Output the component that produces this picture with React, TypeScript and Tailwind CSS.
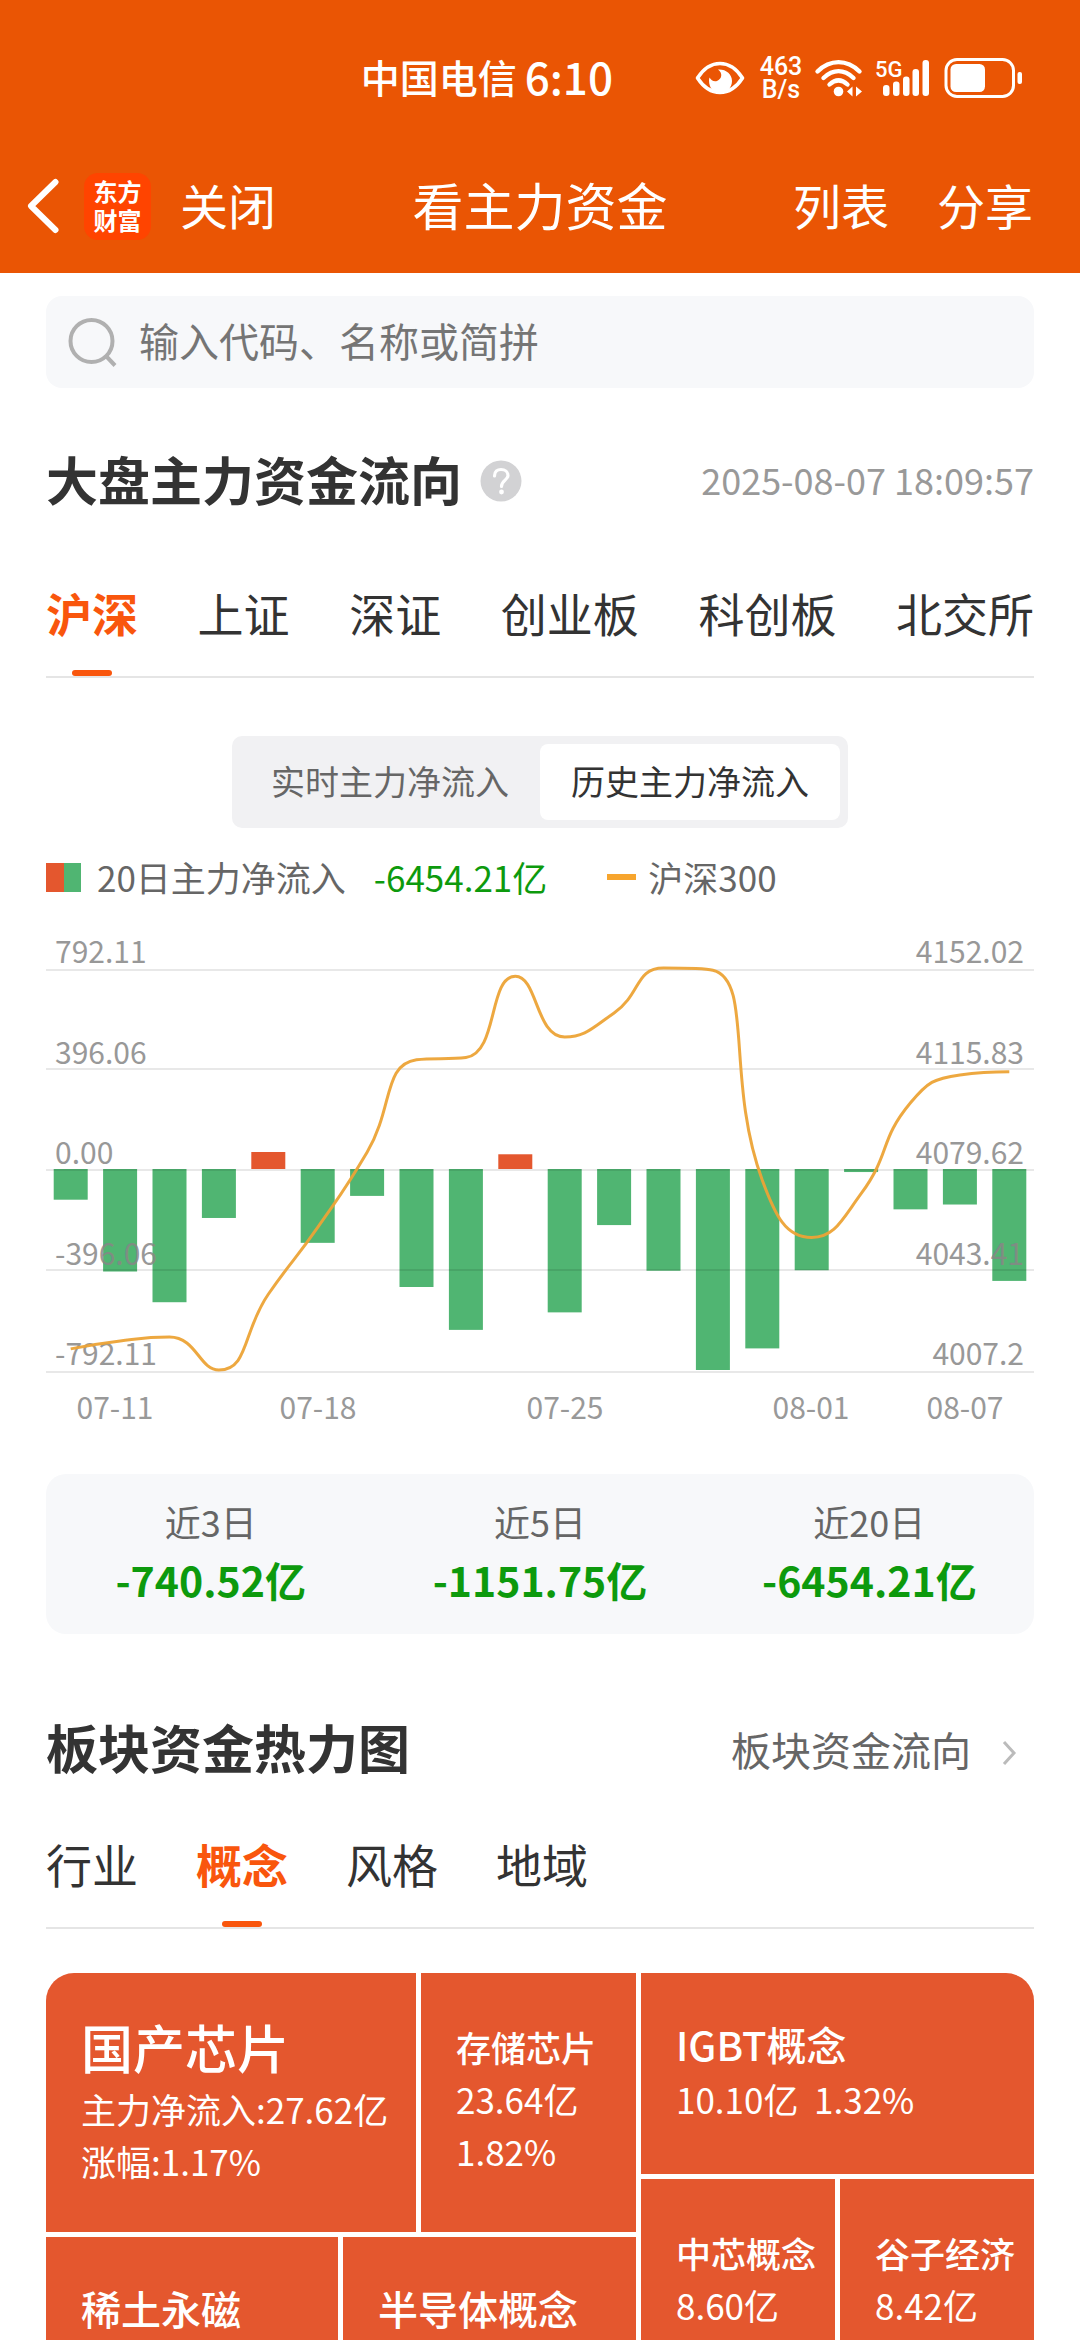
import { clsx } from "clsx";

const marketTabs = ["沪深", "上证", "深证", "创业板", "科创板", "北交所"];
const boardTabs = ["行业", "概念", "风格", "地域"];

// daily net inflow (亿) and CSI 300 close
const flows = [
  -121, -404, -525, -193, 67, -291, -106, -465, -634, 58, -565, -221, -401, -792.11, -707, -399, -12, -159, -140, -441,
];
const closes = [
  4014.81, 4017.67, 4019.06, 4007.2, 4034.49, 4058.55, 4085.61, 4118.96, 4119.77, 4149.04, 4127.16, 4135.82, 4152.02,
  4151.24, 4075.59, 4054.93, 4070.7, 4103.45, 4113.49, 4114.67,
];

const axisRows = [
  { left: "792.11", right: "4152.02", y: 39 },
  { left: "396.06", right: "4115.83", y: 138 },
  { left: "0.00", right: "4079.62", y: 239 },
  { left: "-396.06", right: "4043.41", y: 339 },
  { left: "-792.11", right: "4007.2", y: 441 },
];

const dateLabels = [
  { text: "07-11", x: 69 },
  { text: "07-18", x: 272 },
  { text: "07-25", x: 519 },
  { text: "08-01", x: 765 },
  { text: "08-07", x: 919 },
];

const summary = [
  { label: "近3日", value: "-740.52亿" },
  { label: "近5日", value: "-1151.75亿" },
  { label: "近20日", value: "-6454.21亿" },
];

const CHART_W = 988;
const ZERO_Y = 239;
const HALF_H = 201;
const STEP = CHART_W / flows.length;

type Point = [number, number];

function clamp(v: number, a: number, b: number) {
  return Math.max(Math.min(a, b), Math.min(Math.max(a, b), v));
}

// smooth curve whose control points stay inside each segment's box
function smoothPath(pts: Point[], smooth = 0.5) {
  let d = `M${pts[0][0]},${pts[0][1]}`;
  let c0: Point = pts[0];
  for (let i = 1; i < pts.length; i++) {
    const prev = pts[i - 1];
    const cur = pts[i];
    const next = pts[i + 1];
    let c1: Point = cur;
    let nextC0: Point = cur;
    if (next) {
      const lenPrev = Math.hypot(cur[0] - prev[0], cur[1] - prev[1]);
      const lenNext = Math.hypot(next[0] - cur[0], next[1] - cur[1]);
      const ratio = lenNext / (lenNext + lenPrev);
      const out = [0, 1].map((k) => {
        const v = next[k] - prev[k];
        let n = clamp(cur[k] + v * smooth * ratio, cur[k], next[k]);
        const p = clamp(cur[k] - ((n - cur[k]) * lenPrev) / lenNext, prev[k], cur[k]);
        n = cur[k] + ((cur[k] - p) * lenNext) / lenPrev;
        return [p, n];
      });
      c1 = [out[0][0], out[1][0]];
      nextC0 = [out[0][1], out[1][1]];
    }
    d += ` C${c0[0]},${c0[1]} ${c1[0]},${c1[1]} ${cur[0]},${cur[1]}`;
    c0 = nextC0;
  }
  return d;
}

function FlowChart() {
  const line = closes.map((c, i): Point => [
    STEP * (i + 0.5),
    ZERO_Y - HALF_H + ((4152.02 - c) / (4152.02 - 4007.2)) * HALF_H * 2,
  ]);

  return (
    <svg viewBox="0 0 988 500" className="block w-full" role="img" aria-label="历史主力净流入">
      {flows.map((v, i) => {
        const h = (Math.abs(v) / 792.11) * HALF_H;
        return (
          <rect
            key={i}
            x={STEP * (i + 0.5) - 17}
            y={v > 0 ? ZERO_Y - h : ZERO_Y}
            width={34}
            height={h}
            fill={v > 0 ? "#e4572e" : "#50b572"}
          />
        );
      })}
      {axisRows.map((row, i) => {
        const labelY = Math.round(33 + i * 100.5);
        return (
          <g key={row.left}>
            <rect x={0} y={row.y} width={988} height={2} fill="#000" opacity={0.09} />
            <g className="text-[30px]" fill="#878787" opacity={0.85}>
              <text x={9} y={labelY}>
                {row.left}
              </text>
              <text x={978} y={labelY} textAnchor="end">
                {row.right}
              </text>
            </g>
          </g>
        );
      })}
      <path d={smoothPath(line)} fill="none" stroke="#eca336" strokeWidth={3} opacity={0.95} />
      <g className="text-[30px]" fill="#999" textAnchor="middle">
        {dateLabels.map((d) => (
          <text key={d.text} x={d.x} y={489}>
            {d.text}
          </text>
        ))}
      </g>
    </svg>
  );
}

function StatusBar() {
  return (
    <div className="flex h-[156px] items-center justify-end gap-[82px] pr-[56px]">
      <div className="flex items-center gap-2 pb-1 font-medium">
        <span className="text-[39px]">中国电信</span>
        <span className="text-[44px]">6:10</span>
      </div>
      <div className="flex items-center">
        <svg viewBox="0 0 50 34" className="h-[34px] w-[50px]" fill="none" aria-hidden>
          <path
            d="M2.5 17 C9 7 17 2.5 25 2.5 S41 7 47.5 17 C41 27 33 31.5 25 31.5 S9 27 2.5 17Z"
            stroke="white"
            strokeWidth="3.6"
            strokeLinejoin="round"
          />
          <path
            d="M23 8.5 C31 8 37 13 37 20 C37 27 31.5 32 25 32 C19 32 14 27.5 14 19.5 C14 18.5 14.2 17.5 14.6 16.5 C16 19.500 19 21 22 20 C27 18 28 12 23 8.5Z"
            fill="white"
          />
        </svg>
        <div className="ml-[13px] flex w-[46px] flex-col items-center font-['Roboto'] text-[25px] leading-[23px] font-medium">
          <span>463</span>
          <span>B/s</span>
        </div>
        <svg viewBox="0 0 50 38" className="ml-[10px] h-[38px] w-[50px]" fill="none" aria-hidden>
          <g stroke="white" strokeWidth="4.4" strokeLinecap="round">
            <path d="M3.5 12.5 C16 0 33 0 45.5 12.5" />
            <path d="M9.5 19 C19 10 30 10 39.5 19" />
            <path d="M15.5 25.5 C21.5 20 27.5 20 33.5 25.5" />
          </g>
          <circle cx="24.5" cy="32.5" r="4.8" fill="white" />
          <path d="M38.5 27.5 V37.5 L33 32.5Z M42 27.5 V37.5 L48 32.5Z" fill="white" />
        </svg>
        <svg viewBox="0 -4 56 48" className="ml-[10px] h-[48px] w-[56px]" aria-hidden>
          <text x="1" y="19" fill="white" className="font-['Roboto'] text-[22px] font-medium">
            5G
          </text>
          <g fill="white">
            <rect x="9" y="27" width="6.5" height="11" rx="3" />
            <rect x="19" y="23.5" width="6.5" height="14.5" rx="3" />
            <rect x="29" y="18.5" width="6.5" height="19.5" rx="3" />
            <rect x="38.5" y="11" width="6.5" height="27" rx="3" />
            <rect x="48.5" y="2" width="6.5" height="36" rx="3" />
          </g>
        </svg>
        <svg viewBox="0 0 80 42" className="ml-[14px] h-[42px] w-[80px]" aria-hidden>
          <rect x="2" y="2.5" width="67.5" height="37" rx="11" fill="none" stroke="white" strokeWidth="3" />
          <rect x="6.5" y="7" width="34.5" height="28" rx="5.5" fill="white" />
          <rect x="73.5" y="15" width="4.5" height="12" rx="2" fill="white" />
        </svg>
      </div>
    </div>
  );
}

function NavBar() {
  return (
    <nav className="grid h-[100px] grid-cols-[1fr_auto_1fr] items-center px-[26px]">
      <div className="flex items-center">
        <button type="button" aria-label="返回">
          <svg viewBox="0 0 34 56" className="h-[56px] w-[34px]" fill="none" aria-hidden>
            <path d="M29.5 4 L5 28 L29.5 52" stroke="white" strokeWidth="6" strokeLinecap="round" strokeLinejoin="round" />
          </svg>
        </button>
        <span className="ml-6 flex size-[67px] flex-col items-center justify-center rounded-[14px] bg-[#ff4400] pb-0.5 text-[24px] leading-[29px] font-bold">
          <span>东方</span>
          <span>财富</span>
        </span>
        <button type="button" className="ml-[29px] pb-1 text-[48px]">
          关闭
        </button>
      </div>
      <h1 className="pb-1 text-[51px]">看主力资金</h1>
      <div className="flex justify-end gap-12 pr-[21px] pb-1 text-[48px]">
        <button type="button">列表</button>
        <button type="button">分享</button>
      </div>
    </nav>
  );
}

function Tabs({ items, active, className }: { items: string[]; active: string; className: string }) {
  return (
    <div role="tablist" className={clsx("flex border-b-2 border-[#e5e5e5] text-[46px] leading-[61px]", className)}>
      {items.map((item) => (
        <button
          key={item}
          type="button"
          role="tab"
          aria-selected={item === active}
          className={clsx(
            "flex flex-col items-center justify-between",
            item === active ? "font-bold text-[#f9560d]" : "text-[#333]",
          )}
        >
          {item}
          {item === active && <span className="h-[6px] w-10 rounded-full bg-[#f9560d]" />}
        </button>
      ))}
    </div>
  );
}

type TileProps = { name: string; lines: string[]; className: string; nameClass?: string };

function Tile({ name, lines, className, nameClass = "text-[35px] leading-[52px]" }: TileProps) {
  return (
    <div className={clsx("overflow-hidden bg-[#e4572e] pl-[35px] text-[35px] leading-[52px] whitespace-nowrap text-white", className)}>
      <h3 className={clsx("font-medium", nameClass)}>{name}</h3>
      {lines.map((l) => (
        <p key={l} className="whitespace-pre">
          {l}
        </p>
      ))}
    </div>
  );
}

export default function App() {
  return (
    <div className="flex h-screen flex-col overflow-hidden bg-white font-['Noto_Sans_CJK_SC',sans-serif] text-[#333]">
      <header className="h-[273px] flex-none bg-[#ea5504] text-white">
        <StatusBar />
        <NavBar />
      </header>

      <main className="flex min-h-0 flex-1 flex-col px-[46px] pt-[23px]">
        <label className="flex h-[92px] flex-none items-center gap-[21px] rounded-2xl bg-[#f7f8fa] px-[22px]">
          <svg viewBox="0 0 50 50" className="size-[50px]" fill="none" stroke="#b0b0b0" strokeWidth="4" aria-hidden>
            <circle cx="23.5" cy="24" r="21" />
            <path d="M38 39 L47 48.5" />
          </svg>
          <input
            type="search"
            aria-label="搜索"
            placeholder="输入代码、名称或简拼"
            className="min-w-0 flex-1 bg-transparent pb-1 text-[40px] outline-none placeholder:text-[#757575]"
          />
        </label>

        <div className="mt-[55px] flex h-[76px] flex-none items-center justify-between">
          <div className="flex items-center gap-[18px]">
            <h2 className="pb-1 text-[52px] font-bold">大盘主力资金流向</h2>
            <button type="button" aria-label="说明">
              <svg viewBox="0 0 42 42" className="size-[42px]" fill="none" aria-hidden>
                <circle cx="21" cy="21" r="20.5" fill="#d2d2d4" />
                <path
                  d="M14.5 16 C14.5 11.5 17.5 9.5 21 9.5 C25 9.5 28 12 28 15.5 C28 20 21.5 20.5 21.5 26.5"
                  stroke="white"
                  strokeWidth="3.2"
                  strokeLinecap="round"
                />
                <circle cx="21.5" cy="32" r="2.4" fill="white" />
              </svg>
            </button>
          </div>
          <time className="pb-1 text-[36px] text-[#999]">2025-08-07 18:09:57</time>
        </div>

        <Tabs items={marketTabs} active="沪深" className="mt-[63px] h-[96px] flex-none justify-between" />

        <div className="mt-[58px] flex h-[92px] flex-none self-center rounded-[10px] bg-[#f1f1f3] p-2 text-[34px]">
          <button type="button" className="w-[300px] pb-1 text-[#666]">
            实时主力净流入
          </button>
          <button type="button" className="w-[300px] rounded-lg bg-white pb-1">
            历史主力净流入
          </button>
        </div>

        <div className="mt-[23px] flex h-[52px] flex-none items-center text-[35px] text-[#666]">
          <span className="flex h-[29px] w-[35px]">
            <span className="flex-1 bg-[#e4572e]" />
            <span className="flex-1 bg-[#50b572]" />
          </span>
          <span className="ml-4">20日主力净流入</span>
          <span className="ml-7 text-[#0d9a0d]">-6454.21亿</span>
          <span className="ml-[60px] h-[6px] w-[29px] bg-[#f7a52e]" />
          <span className="ml-3">沪深300</span>
        </div>

        <div className="mt-[27px] flex-none">
          <FlowChart />
        </div>

        <dl className="mt-11 grid h-[160px] flex-none grid-cols-3 content-center rounded-[20px] bg-[#f7f8fa] pb-1 text-center">
          {summary.map((s) => (
            <div key={s.label}>
              <dt className="text-[36px] leading-[58px] text-[#666]">{s.label}</dt>
              <dd className="pb-1 text-[41px] leading-[58px] font-bold text-[#0d9a0d]">{s.value}</dd>
            </div>
          ))}
        </dl>

        <div className="mt-[77px] flex h-[76px] flex-none items-center justify-between">
          <h2 className="pb-1 text-[52px] font-bold">板块资金热力图</h2>
          <a href="#flow" className="flex items-center gap-[30px] pr-[17px] text-[40px] text-[#666]">
            板块资金流向
            <svg viewBox="0 0 16 28" className="mt-2 h-7 w-4" fill="none" aria-hidden>
              <path d="M3 3 L13 14 L3 25" stroke="#bbb" strokeWidth="3" />
            </svg>
          </a>
        </div>

        <Tabs items={boardTabs} active="概念" className="mt-[46px] h-[96px] flex-none gap-[58px]" />

        <section className="mt-11 grid min-h-0 flex-1 grid-cols-[590fr_393fr] gap-[5px] overflow-hidden rounded-t-[28px]">
          <div className="flex min-h-0 flex-col gap-[5px]">
            <div className="grid h-[259px] flex-none grid-cols-[370fr_215fr] gap-[5px]">
              <Tile
                name="国产芯片"
                lines={["主力净流入:27.62亿", "涨幅:1.17%"]}
                className="pt-[38px]"
                nameClass="text-[52px] leading-[72px]"
              />
              <Tile name="存储芯片" lines={["23.64亿", "1.82%"]} className="pt-12" />
            </div>
            <div className="grid min-h-0 flex-1 grid-cols-[292fr_293fr] gap-[5px]">
              <Tile name="稀土永磁" lines={[]} className="pt-[42px]" nameClass="text-[40px] leading-[58px]" />
              <Tile name="半导体概念" lines={[]} className="pt-[42px]" nameClass="text-[40px] leading-[58px]" />
            </div>
          </div>
          <div className="flex min-h-0 flex-col gap-[5px]">
            <Tile
              name="IGBT概念"
              lines={["10.10亿  1.32%"]}
              className="h-[201px] flex-none pt-[42px]"
              nameClass="text-[40px] leading-[58px]"
            />
            <div className="grid min-h-0 flex-1 grid-cols-2 gap-[5px]">
              <Tile name="中芯概念" lines={["8.60亿"]} className="pt-12" />
              <Tile name="谷子经济" lines={["8.42亿"]} className="pt-12" />
            </div>
          </div>
        </section>
      </main>
    </div>
  );
}
